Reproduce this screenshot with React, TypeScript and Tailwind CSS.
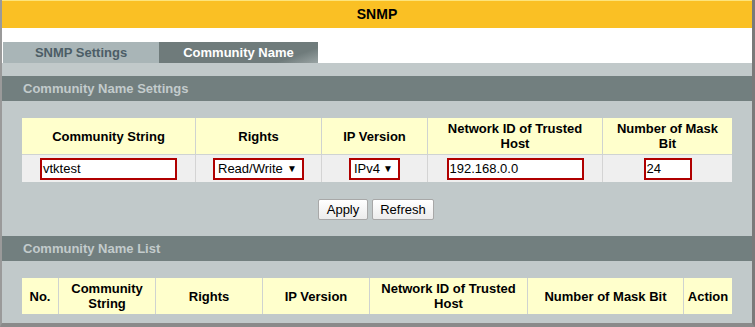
import React from 'react';

const font = "font-['Liberation_Sans',Arial,sans-serif]";

function SectionHeader({ title }: { title: string }) {
  return <div className="h-[25px] bg-[#727f7f] flex items-center pl-[21px]">
      <span className="text-[13px] font-bold text-[#c3cbcc]">{title}</span>
    </div>;
}

function RedInput({ value, width }: { value: string; width: string }) {
  return <div className={`${width} h-[22px] border-2 border-[#b00000] bg-white flex items-center px-[1px] text-[13px] text-black`}>
      {value}
    </div>;
}

function RedSelect({ value, width }: { value: string; width: string }) {
  return <div className={`${width} h-[22px] border-2 border-[#b00000] bg-white flex items-center justify-between pl-[3px] pr-[5px] text-[13px] text-black`}>
      <span>{value}</span>
      <span className="text-[10px]">▼</span>
    </div>;
}

const settingsCols = [
  { label: 'Community String', w: 'w-[173px]' },
  { label: 'Rights', w: 'w-[126px]' },
  { label: 'IP Version', w: 'w-[106px]' },
  { label: 'Network ID of Trusted Host', w: 'w-[175px]' },
  { label: 'Number of Mask Bit', w: 'w-[130px]' },
];

const listCols = [
  { label: 'No.', w: 'w-[36px]' },
  { label: 'Community String', w: 'w-[97px]' },
  { label: 'Rights', w: 'w-[107px]' },
  { label: 'IP Version', w: 'w-[107px]' },
  { label: 'Network ID of Trusted Host', w: 'w-[158px]' },
  { label: 'Number of Mask Bit', w: 'w-[156px]' },
  { label: 'Action', w: 'w-[49px]' },
];

export default function App() {
  return <div className={`w-[755px] h-[327px] bg-white ${font} overflow-hidden`}>
      <div className="h-full border-l-2 border-l-[#9a9a9a] border-r-[3px] border-r-[#7a7a7a] border-b-[4px] border-b-[#8a8a8a] flex flex-col">
        {/* title bar */}
        <div className="h-[28px] bg-[#fac024] border-t border-t-[#fde47a] flex items-center justify-center">
          <span className="text-[14px] font-bold text-black">SNMP</span>
        </div>
        <div className="h-[14px] bg-white" />

        {/* tabs */}
        <div className="h-[21px] flex pl-[1px] bg-white">
          <div className="w-[156px] bg-[#a9b5b7] flex items-center justify-center">
            <span className="text-[13px] font-bold text-[#4c5d66]">SNMP Settings</span>
          </div>
          <div className="w-[159px] bg-[linear-gradient(160deg,#6f7b7b_0%,#6f7b7b_80%,#9aa4a4_100%)] flex items-center justify-center">
            <span className="text-[13px] font-bold text-white">Community Name</span>
          </div>
        </div>

        <div className="flex-1 bg-[#c1c9ca] flex flex-col">
          <div className="h-[13px]" />
          <SectionHeader title="Community Name Settings" />

          {/* settings table */}
          <div className="pt-[17px] pl-[20px]">
            <div className="w-[710px] flex flex-col text-[13px]">
              <div className="flex h-[36px] bg-[#ffffcc]">
                {settingsCols.map((c, i) => <div key={c.label} className={`${c.w} flex items-center justify-center text-center font-bold text-black leading-[15px] px-2 ${i > 0 ? 'border-l border-l-[#cfd3d0]' : ''}`}>
                    {c.label}
                  </div>)}
              </div>
              <div className="flex h-[28px] bg-[#efefef] border-t border-t-[#cfd3d3]">
                <div className="w-[173px] flex items-center justify-center">
                  <RedInput value="vtktest" width="w-[137px]" />
                </div>
                <div className="w-[126px] flex items-center justify-center border-l border-l-[#d4d4d4]">
                  <RedSelect value="Read/Write" width="w-[91px]" />
                </div>
                <div className="w-[106px] flex items-center justify-center border-l border-l-[#d4d4d4]">
                  <RedSelect value="IPv4" width="w-[51px]" />
                </div>
                <div className="w-[175px] flex items-center justify-center border-l border-l-[#d4d4d4]">
                  <RedInput value="192.168.0.0" width="w-[137px]" />
                </div>
                <div className="w-[130px] flex items-center justify-center border-l border-l-[#d4d4d4]">
                  <RedInput value="24" width="w-[48px]" />
                </div>
              </div>
            </div>
          </div>

          {/* buttons */}
          <div className="flex justify-center gap-[4px] pt-[17px] pr-[2px]">
            <button className="h-[21px] w-[50px] bg-[linear-gradient(#ffffff,#ececec)] border border-[#a8a8a8] rounded-[2px] text-[13px] text-black">Apply</button>
            <button className="h-[21px] w-[62px] bg-[linear-gradient(#ffffff,#ececec)] border border-[#a8a8a8] rounded-[2px] text-[13px] text-black">Refresh</button>
          </div>

          <div className="h-[16px]" />
          <SectionHeader title="Community Name List" />

          {/* list table */}
          <div className="pt-[17px] pl-[20px]">
            <div className="w-[710px] flex h-[36px] bg-[#ffffcc] text-[13px]">
              {listCols.map((c, i) => <div key={c.label} className={`${c.w} flex items-center justify-center text-center font-bold text-black leading-[15px] px-1 ${i > 0 ? 'border-l border-l-[#cfd3d0]' : ''}`}>
                  {c.label}
                </div>)}
            </div>
          </div>
        </div>
      </div>
    </div>;
}
